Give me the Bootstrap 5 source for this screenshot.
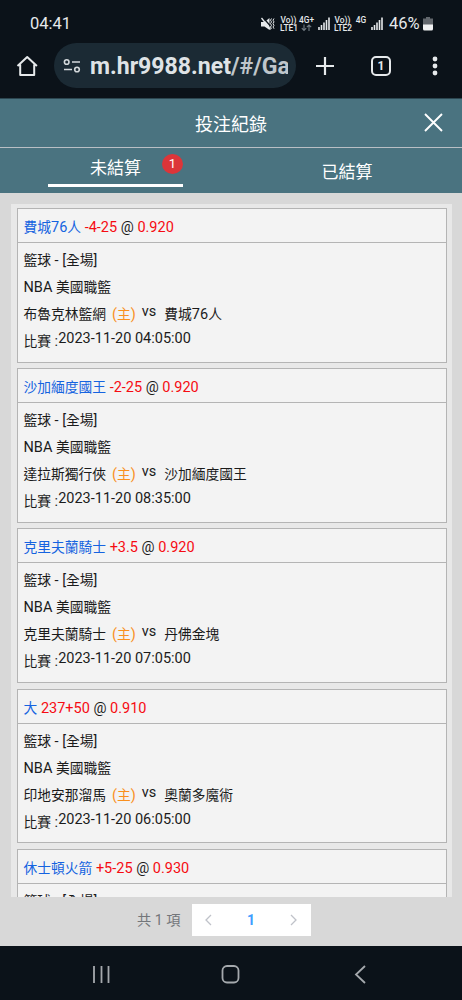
<!DOCTYPE html>
<html lang="zh-Hant">
<head>
<meta charset="utf-8">
<meta name="viewport" content="width=device-width, initial-scale=1">
<title>投注紀錄</title>
<link href="https://cdn.jsdelivr.net/npm/bootstrap@5.3.0/dist/css/bootstrap.min.css" rel="stylesheet">
<style>
body{font-family:Roboto,"Noto Sans CJK TC",sans-serif;background:#0b1219;color:#1b1b1b;height:1000px;overflow:hidden;font-size:14.5px;line-height:27px}
svg{display:block;flex:none}
.status{height:44px;padding:3px 29px 0 30px;color:#e6e9eb;font-size:16.5px;line-height:40px}
.net{font-size:8.4px;line-height:8px;font-weight:500;text-align:center;flex:none;white-space:nowrap}
.toolbar{height:54px;color:#e6e9eb}
.url{margin-left:15px;margin-top:-1px;width:242px;height:45px;border-radius:23px;background:#1b2a34;padding:0 8px 0 9px}
.addr{font-size:23.1px;line-height:45px;font-weight:700;margin-left:9px;width:199px;overflow:hidden;white-space:nowrap;color:#dfe3e6;padding-top:2px}
.addr span{color:#bfc6cb}
.tabs-count{width:20px;height:20px;border:2px solid #e6e9eb;border-radius:5px;font-size:12px;font-weight:700;line-height:16px}
.title{height:50px;background:#4a7380;border-top:1px solid #2c4650;border-bottom:1px solid #b9bfc5;color:#fff;font-size:18px;line-height:52px}
.title svg{right:19px;top:14px}
.tabs{height:45px;background:#4a7380;color:#fff;font-size:17px;line-height:26px}
.tab-on{width:135px;height:39px;margin-left:48px;border-bottom:3px solid #fff;padding-top:7px}
.count{right:0;top:6px;width:21px;height:20px;border-radius:50%;background:#dc3539;font-size:13px;line-height:20px}
.tab-off{width:231px;padding:11px 0 0 1px}
.page-body{height:753px;background:#d8d8d8;padding:11px 10px 0 11px}
.bets{height:693px;background:#e8e8e8;padding:4px 5px 0 6px;overflow:hidden}
.bet{height:154.7px;margin-bottom:5.55px;border:1px solid #b4b4b4;background:#f3f3f3}
.bet-head{height:34px;border-bottom:1px solid #b4b4b4;padding:5px 5.5px 0;white-space:pre}
.bet-body{padding:4px 5.5px}
.bet-body>div{height:27px;white-space:pre}
.zh{font-size:13.75px}
.pick{color:#1563e0}
.odds{color:#f60b12}
.home{color:#f9901d;margin:0 6px}
.vs{margin-right:8px;position:relative;top:-3px}
.when{position:relative;top:-3px}
.pager{height:49px;padding:7px 0 0 126px;color:#73767a}
.total{width:54.5px;line-height:32px;font-size:14.2px;white-space:nowrap}
.pages{width:119px;height:32px;background:#fff;color:#409eff;font-weight:700;font-size:14px;line-height:32px;padding:0 12px}
.sysnav{height:54px}
</style>
</head>
<body>
<div class="status d-flex align-items-center">
  <div>04:41</div>
  <div class="d-flex align-items-center ms-auto">
    <svg width="14" height="14" viewBox="0 0 14 14" fill="#e6e9eb" stroke="#e6e9eb"><path d="M0 5h3.500L8.500 1v12L3.500 9.500H0z" stroke="none"/><path d="M2 0.500 12 12" stroke="#0b1219" stroke-width="1.300"/><path d="M.5 1l9 11.500" stroke-width="1.300"/><path d="M10.500 1.500l-1 1.700 1 1.700-1 1.700 1 1.700-1 1.700 1 1.700M13 1.500l-1 1.700 1 1.700-1 1.700 1 1.700-1 1.700 1 1.700" fill="none" stroke-width="1"/></svg>
    <div class="net" style="margin-left:5px;width:17px">Vo))<br>LTE1</div>
    <div class="net" style="margin-left:2px;width:15px">4G+<svg width="15" height="8" viewBox="0 0 15 8" fill="none" stroke="#727b82" stroke-width="1.100"><path d="M5 .5v6M2.800 4.200 5 6.500l2.200-2.300M10 7V1M7.800 3.200 10 1l2.200 2.200"/></svg></div>
    <svg style="margin-left:4px" width="12" height="13" viewBox="0 0 12 13" stroke="#e6e9eb" stroke-width="1.600"><path d="M1 10v3M3.500 8v5M6 5.500V13M8.500 3v10M11 .5V13"/></svg>
    <div class="net" style="margin-left:4px;width:17px">Vo))<br>LTE2</div>
    <div class="net" style="margin-left:4px;width:12px;height:16px">4G</div>
    <svg style="margin-left:4px" width="12" height="13" viewBox="0 0 12 13" stroke="#e6e9eb" stroke-width="1.600"><path d="M1 10v3M3.500 8v5M6 5.500V13M8.500 3v10M11 .5V13"/></svg>
    <div style="margin:0 2px 0 6px;width:32px">46%</div>
    <svg width="10" height="14" viewBox="0 0 10 14"><path d="M3 0h4v1.500h3V8H0V1.500h3z" fill="#62676d"/><path d="M0 7.500h10V12q0 1.500-1.500 1.500h-7Q0 13.500 0 12z" fill="#f0f1f2"/></svg>
  </div>
</div>
<div class="toolbar d-flex align-items-start">
  <svg style="margin:11px 0 0 16px" width="23" height="22" viewBox="0 0 23 22" fill="none" stroke="#e6e9eb" stroke-width="2" stroke-linejoin="round"><path d="M1.500 11 11.200 2l9.700 9M4.200 9.500V20h14V9.500"/></svg>
  <div class="url d-flex align-items-center">
    <svg width="18" height="16" viewBox="0 0 18 16" fill="none" stroke="#d3d8db" stroke-width="1.600"><circle cx="3.700" cy="4" r="2.300"/><path d="M9 4h8M1 11.500h8"/><circle cx="14" cy="11.500" r="2.300"/></svg>
    <div class="addr">m.hr9988.net<span>/#/Ga</span></div>
  </div>
  <svg style="margin:13px 0 0 20px" width="18" height="18" viewBox="0 0 18 18" stroke="#e6e9eb" stroke-width="2.200"><path d="M9 0v18M0 9h18"/></svg>
  <div class="tabs-count text-center" style="margin:12px 0 0 37px">1</div>
  <svg style="margin:12px 0 0 41px" width="6" height="20" viewBox="0 0 6 20" fill="#e6e9eb"><circle cx="3" cy="3" r="2.400"/><circle cx="3" cy="10" r="2.400"/><circle cx="3" cy="17" r="2.400"/></svg>
</div>
<header class="title text-center position-relative">投注紀錄
  <svg class="position-absolute" width="19" height="19" viewBox="0 0 19 19" stroke="#fff" stroke-width="1.900"><path d="m1 1 17 17M18 1 1 18"/></svg>
</header>
<nav class="tabs d-flex">
  <div class="tab-on text-center position-relative">未結算<span class="count position-absolute">1</span></div>
  <div class="tab-off text-center ms-auto">已結算</div>
</nav>
<main class="page-body">
  <div class="bets" id="bets"></div>
  <div class="pager d-flex">
    <div class="total">共 1 項</div>
    <div class="pages d-flex align-items-center justify-content-between">
      <svg width="9" height="12" viewBox="0 0 9 12" fill="none" stroke="#bfc2c9" stroke-width="1.300"><path d="M7 1 2 6l5 5"/></svg>
      <span>1</span>
      <svg width="9" height="12" viewBox="0 0 9 12" fill="none" stroke="#bfc2c9" stroke-width="1.300"><path d="m2 1 5 5-5 5"/></svg>
    </div>
  </div>
</main>
<footer class="sysnav d-flex align-items-center">
  <svg width="462" height="53" viewBox="0 0 462 53" fill="none" stroke="#a5a9ad" stroke-width="1.800"><path d="M94 19v17M101.500 19v17M108.500 19v17"/><rect x="222.500" y="19" width="16" height="16.500" rx="4.500"/><path d="m365 19-9 8.500 9 8.500"/></svg>
</footer>
<script>
const bets = [
  ['費城76人','-4-25','0.920','布魯克林籃網','費城76人','04:05:00'],
  ['沙加緬度國王','-2-25','0.920','達拉斯獨行俠','沙加緬度國王','08:35:00'],
  ['克里夫蘭騎士','+3.5','0.920','克里夫蘭騎士','丹佛金塊','07:05:00'],
  ['大','237+50','0.910','印地安那溜馬','奧蘭多魔術','06:05:00']
];
// Chinese runs are set slightly smaller than the Latin text
const zh = s => s.replace(/[\u4e00-\u9fff]+/g, m => `<span class="zh">${m}</span>`);
const head = ([pick,line,odds]) => `<div class="bet-head"><span class="pick">${zh(pick)}</span> <span class="odds">${line}</span> @ <span class="odds">${odds}</span></div>`;
const sport = `<div>${zh('籃球 - [全場]')}</div>`;
document.getElementById('bets').innerHTML = bets.map(b => `
<section class="bet">${head(b)}<div class="bet-body">${sport}<div>${zh('NBA 美國職籃')}</div><div class="d-flex"><span>${zh(b[3])}</span><span class="home">${zh('(主)')}</span><span class="vs">vs</span><span>${zh(b[4])}</span></div><div class="d-flex"><span>${zh('比賽 :')}</span><span class="when">2023-11-20 ${b[5]}</span></div></div></section>`).join('')
 + `<section class="bet">${head(['休士頓火箭','+5-25','0.930'])}<div class="bet-body">${sport}</div></section>`;
</script>
<script src="https://cdn.jsdelivr.net/npm/bootstrap@5.3.0/dist/js/bootstrap.bundle.min.js"></script>
</body>
</html>
